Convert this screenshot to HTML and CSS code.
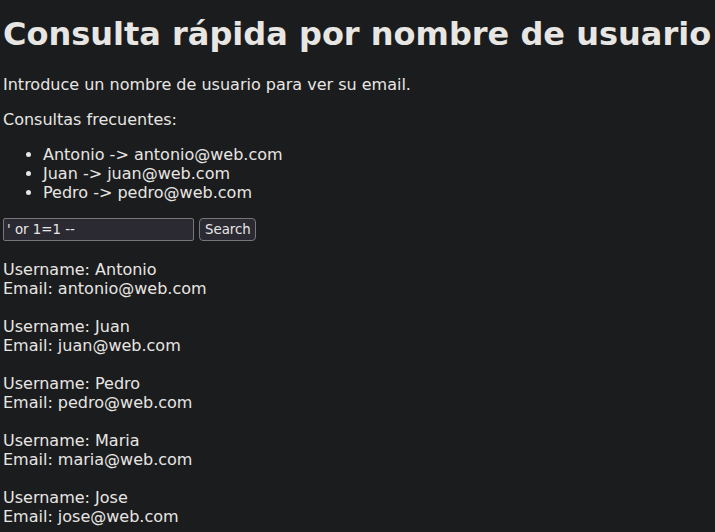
FILE: index.html
```html
<!DOCTYPE html>
<html lang="es">
<head>
    <meta charset="UTF-8">
    <meta name="viewport" content="width=device-width, initial-scale=1.0">
    <title>Consulta rápida</title>
    <link rel="stylesheet" href="styles.css">
</head>
<body>
    <h1>Consulta rápida por nombre de usuario</h1>
    <p>Introduce un nombre de usuario para ver su email.</p>
    <p>Consultas frecuentes:</p>
    <ul>
        <li>Antonio -&gt; antonio@web.com</li>
        <li>Juan -&gt; juan@web.com</li>
        <li>Pedro -&gt; pedro@web.com</li>
    </ul>

    <form class="search-form" onsubmit="return false;">
        <input type="text" name="username" value="' or 1=1 --">
        <button type="submit">Search</button>
    </form>

    <!-- Results -->
    <div class="results">
        <p>Username: Antonio<br>Email: antonio@web.com</p>
        <p>Username: Juan<br>Email: juan@web.com</p>
        <p>Username: Pedro<br>Email: pedro@web.com</p>
        <p>Username: Maria<br>Email: maria@web.com</p>
        <p>Username: Jose<br>Email: jose@web.com</p>
    </div>
</body>
</html>
```

FILE: styles.css
```css
body {
    margin: 0 3px;
    background-color: #1b1c1e;
    color: #e8e6e3;
    font-family: "DejaVu Sans", sans-serif;
    font-size: 16px;
}

h1 {
    font-size: 32px;
    font-weight: bold;
    margin: 15px 0 22px;
    white-space: nowrap;
}

p {
    margin: 16px 0;
}

ul {
    margin: 16px 0;
    padding-left: 40px;
}

.search-form {
    display: flex;
    align-items: center;
    gap: 5px;
    margin: 16px 0 19px;
}

.search-form input {
    box-sizing: border-box;
    width: 191px;
    height: 23px;
    padding: 1px 3px;
    background-color: #2b2a33;
    color: #e8e6e3;
    border: 1px solid #77767b;
    border-radius: 2px;
    font-family: "DejaVu Sans", sans-serif;
    font-size: 13.33px;
}

.search-form button {
    box-sizing: border-box;
    width: 57px;
    height: 23px;
    padding: 1px 5px;
    background-color: #2b2a33;
    color: #e8e6e3;
    border: 1px solid #77767b;
    border-radius: 4px;
    font-family: "DejaVu Sans", sans-serif;
    font-size: 13.33px;
}

.results p {
    margin: 0 0 19px;
}
```
